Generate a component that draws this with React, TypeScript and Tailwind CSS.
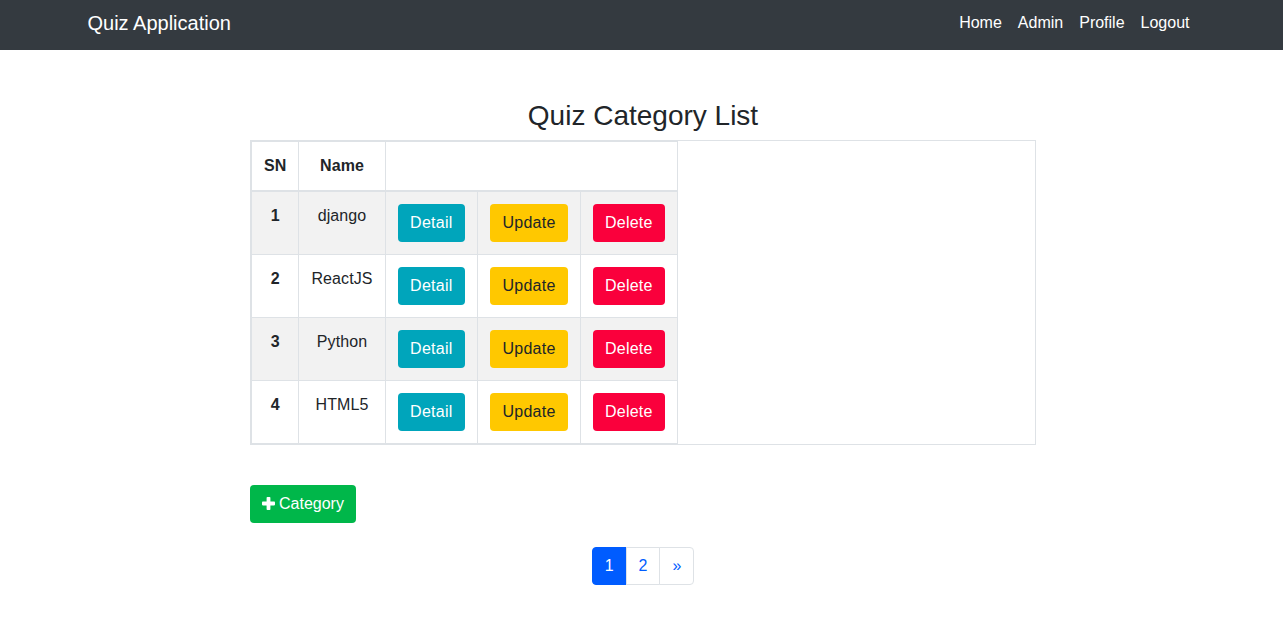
import React from 'react'

const categories = [
  { sn: 1, name: 'django' },
  { sn: 2, name: 'ReactJS' },
  { sn: 3, name: 'Python' },
  { sn: 4, name: 'HTML5' },
]

function PlusIcon() {
  return (
    <svg width="13" height="13" viewBox="0 0 13 13" className="inline-block" aria-hidden="true">
      <rect x="4.6" y="0" width="3.8" height="13" rx="0.8" fill="white" />
      <rect x="0" y="4.6" width="13" height="3.8" rx="0.8" fill="white" />
    </svg>
  )
}

export default function App() {
  return (
    <div className="min-h-screen bg-white text-[#212529] font-['Liberation_Sans',Arial,sans-serif]">
      {/* Navbar */}
      <nav className="bg-[#343a40] h-[50px]">
        <div className="w-[1110px] mx-auto h-full flex items-center justify-between pb-[4px] pl-[1px]">
          <a href="#" className="text-white text-[20px] leading-[30px]">Quiz Application</a>
          <ul className="flex items-center mr-[-1px]">
            {['Home', 'Admin', 'Profile', 'Logout'].map((link) => (
              <li key={link}>
                <a href="#" className="block px-2 text-white text-[16px] leading-6">{link}</a>
              </li>
            ))}
          </ul>
        </div>
      </nav>

      {/* Content */}
      <main className="w-[789px] mx-auto pt-[49px] pl-[3px]">
        <h3 className="text-center text-[28px] leading-[1.2] mb-[7px]">Quiz Category List</h3>

        <div className="border border-[#dee2e6]">
          <table className="border-collapse text-center text-[16px] leading-6 tracking-[0.1px]">
            <thead>
              <tr>
                <th className="border border-[#dee2e6] border-b-2 px-3 py-3 font-bold">SN</th>
                <th className="border border-[#dee2e6] border-b-2 px-3 py-3 font-bold">Name</th>
                <th colSpan={3} className="border border-[#dee2e6] border-b-2 px-3 py-3"></th>
              </tr>
            </thead>
            <tbody>
              {categories.map((c, i) => (
                <tr key={c.sn} className={i % 2 === 0 ? 'bg-[#f2f2f2]' : 'bg-white'}>
                  <td className="border border-[#dee2e6] p-3 align-top font-bold">{c.sn}</td>
                  <td className="border border-[#dee2e6] p-3 align-top">{c.name}</td>
                  <td className="border border-[#dee2e6] p-3 align-top">
                    <button className="bg-[#00a5bb] text-white px-[12.5px] py-[7px] rounded leading-6 tracking-[0.25px]">Detail</button>
                  </td>
                  <td className="border border-[#dee2e6] p-3 align-top">
                    <button className="bg-[#ffc800] text-[#212529] px-[12.5px] py-[7px] rounded leading-6 tracking-[0.25px]">Update</button>
                  </td>
                  <td className="border border-[#dee2e6] p-3 align-top">
                    <button className="bg-[#fa003c] text-white px-3 py-[7px] rounded leading-6 tracking-[0.2px]">Delete</button>
                  </td>
                </tr>
              ))}
            </tbody>
          </table>
        </div>

        <div className="mt-[40px]">
          <button className="bg-[#00b74a] text-white px-3 py-[7px] rounded leading-6 flex items-center gap-[4px]">
            <PlusIcon />
            <span>Category</span>
          </button>
        </div>

        <ul className="flex justify-center mt-6">
          <li>
            <a href="#" className="block bg-[#005cff] border border-[#005cff] text-white px-3 py-2 leading-5 rounded-l">1</a>
          </li>
          <li>
            <a href="#" className="block bg-white border border-[#dee2e6] ml-[-1px] text-[#005cff] px-3 py-2 leading-5">2</a>
          </li>
          <li>
            <a href="#" className="block bg-white border border-[#dee2e6] ml-[-1px] text-[#005cff] px-3 py-2 leading-5 rounded-r">&raquo;</a>
          </li>
        </ul>
      </main>
    </div>
  )
}
